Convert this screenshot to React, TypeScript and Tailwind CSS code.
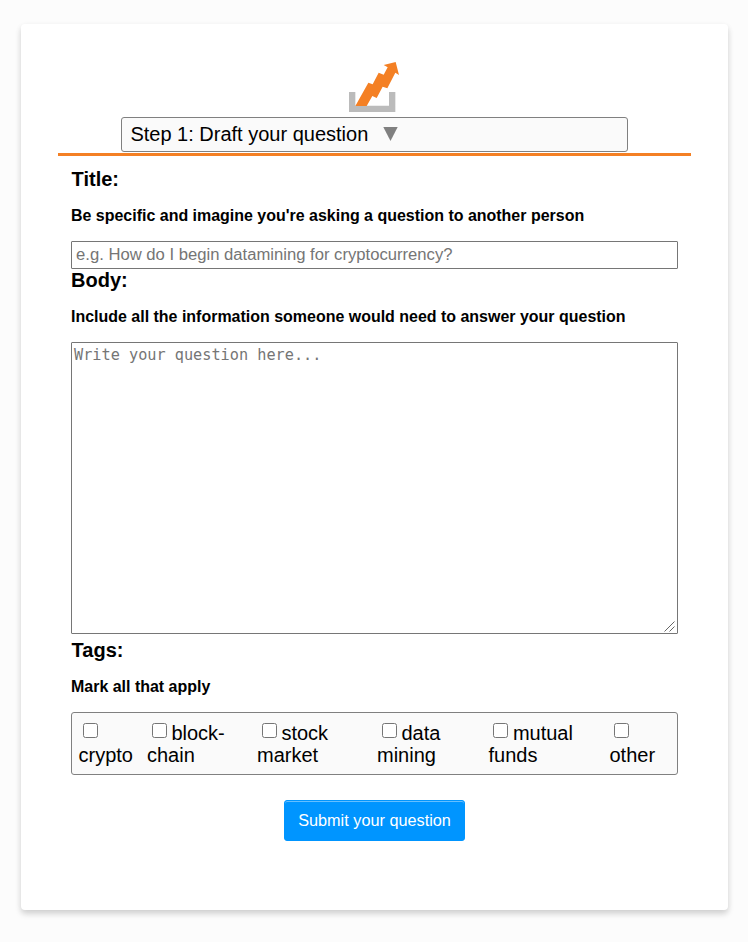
import React from "react";

const tags = [
  { first: "", second: "crypto", width: "w-[68.5px]" },
  { first: "block-", second: "chain", width: "w-[110px]" },
  { first: "stock", second: "market", width: "w-[120px]" },
  { first: "data", second: "mining", width: "w-[111.5px]" },
  { first: "mutual", second: "funds", width: "w-[121px]" },
  { first: "", second: "other", width: "w-[60px]" },
];

function Logo() {
  return (
    <svg className="block h-[60px] w-[60px]" viewBox="45 30 180 180">
      <path d="M57 126h19v41h101v-41h19v60H57z" fill="#bbbbbb" />
      <path
        d="M76 168 115 98l13 5 18-35 15 6 12-22-12-7 36-9 10 39-11-7-24 47-14-5-18 34-13-6-17 30z"
        fill="#f48024"
      />
    </svg>
  );
}

function Heading({ title, hint, indent = "" }: { title: string; hint: string; indent?: string }) {
  return (
    <div>
      <h2 className={`h-[23px] text-[20px] leading-[23px] font-bold ${indent}`}>{title}</h2>
      <p className="mt-[16px] h-[18px] text-[15.98px] leading-[18px] font-bold">{hint}</p>
    </div>
  );
}

export default function App() {
  return (
    <main className="h-[942px] w-[748px] bg-[#fcfcfc] pt-[24px] pl-[21px] font-['Liberation_Sans',Arial,sans-serif] text-black">
      <section className="h-[886px] w-[707px] rounded-[4px] bg-white px-[37px] pt-[36px] shadow-[0_4px_6px_rgba(0,0,0,0.14),0_2px_6px_rgba(0,0,0,0.06)]">
        <header className="flex h-[96px] w-[633px] flex-col items-center border-b-[3px] border-[#f48024]">
          <div className="h-[57px] w-[59px]">
            <Logo />
          </div>
          <button className="flex h-[35px] w-[507px] shrink-0 items-center rounded-[3px] border border-[#808080] bg-[#fafafa] pl-[8.4px] text-left text-[20px] leading-[23px]">
            <span>Step 1: Draft your question</span>
            <svg className="relative -top-px ml-[14.6px] h-[14px] w-[15px]" viewBox="0 0 15 14">
              <path d="M.3 0h14.4L7.5 14z" fill="#808080" />
            </svg>
          </button>
        </header>
        <form className="flex flex-col pt-[12px] pl-[13px]" onSubmit={(e) => e.preventDefault()}>
          <Heading title="Title:" hint="Be specific and imagine you're asking a question to another person" indent="pl-[0.6px]" />
          <input
            className="mt-[16px] h-[28px] w-[607px] rounded-[1px] border border-[#767676] bg-white pl-[4px] text-[16.65px] placeholder:text-[#757575]"
            placeholder="e.g. How do I begin datamining for cryptocurrency?"
          />
          <Heading title="Body:" hint="Include all the information someone would need to answer your question" />
          <div className="relative mt-[16px] h-[292px] w-[607px]">
            <textarea
              className="block h-full w-full resize-none rounded-[1px] border border-[#767676] bg-white px-[2px] pt-[2px] font-['DejaVu_Sans_Mono',monospace] text-[15.22px] leading-[20px] placeholder:text-[#757575]"
              placeholder="Write your question here..."
            />
            <svg className="absolute right-[3px] bottom-[2px] h-[11px] w-[11px]" viewBox="0 0 11 11">
              <path d="M.5 10.5l10-10M5.5 10.5l5-5" stroke="#666666" strokeWidth="1" fill="none" />
            </svg>
          </div>
          <div className="pt-[5px]">
            <Heading title="Tags:" hint="Mark all that apply" indent="pl-[0.6px]" />
          </div>
          <div className="mt-[16px] flex h-[63px] w-[607px] rounded-[3px] border border-[#808080] bg-[#fafafa] pt-[9px] pl-[6.5px] text-[20px] leading-[22px]">
            {tags.map((tag) => (
              <label key={tag.second} className={`${tag.width} shrink-0`}>
                <span className="flex h-[22px]">
                  <input
                    type="checkbox"
                    className="mt-[1px] mr-[4.8px] ml-[4.6px] h-[15px] w-[15px] shrink-0 appearance-none rounded-[2.5px] border border-[#767676] bg-white"
                  />
                  {tag.first}
                </span>
                <span className="block">{tag.second}</span>
              </label>
            ))}
          </div>
          <button className="mt-[25px] ml-[213px] h-[41px] w-[181px] rounded-[3px] border border-[#0095ff] bg-[#0095ff] text-[16.25px] text-white shadow-[inset_0_1px_0_rgba(255,255,255,0.4)]">
            Submit your question
          </button>
        </form>
      </section>
    </main>
  );
}
